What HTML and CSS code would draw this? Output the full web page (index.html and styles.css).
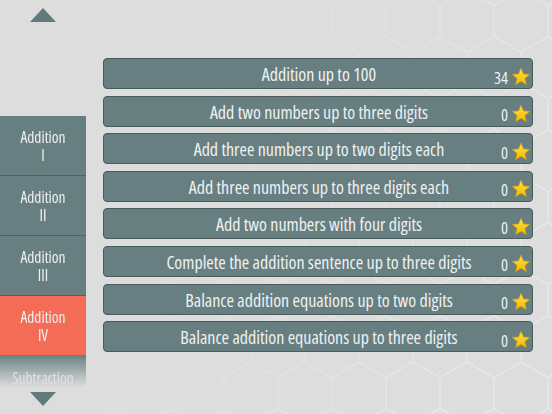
FILE: index.html
```html
<!DOCTYPE html>
<html>
<head>
<meta charset="utf-8">
<link rel="stylesheet" href="styles.css">
</head>
<body>
<div class="page">
  <svg class="hexbg" width="552" height="414" viewBox="0 0 552 414">
    <defs>
      <pattern id="hex" width="54" height="93" patternUnits="userSpaceOnUse" x="8" y="-10">
        <path d="M27 0 L54 15.5 L54 46.5 L27 62 L0 46.5 L0 15.5 Z M27 62 L27 93" fill="none" stroke="#ffffff" stroke-width="1.2"/>
      </pattern>
      <linearGradient id="fade" x1="0" y1="0" x2="1" y2="0.3">
        <stop offset="0.35" stop-color="#fff" stop-opacity="0"/>
        <stop offset="1" stop-color="#fff" stop-opacity="1"/>
      </linearGradient>
      <mask id="m"><rect width="552" height="414" fill="url(#fade)"/></mask>
    </defs>
    <rect width="552" height="414" fill="url(#hex)" mask="url(#m)" opacity="0.35"/>
  </svg>
  <div class="left">
    <div class="arrow up"></div>
    <div class="side">
      <div class="cat"><span class="l1">Addition</span><span class="l2">I</span></div>
      <div class="cat"><span class="l1">Addition</span><span class="l2">II</span></div>
      <div class="cat"><span class="l1">Addition</span><span class="l2">III</span></div>
      <div class="cat active"><span class="l1">Addition</span><span class="l2">IV</span></div>
      <div class="cat cut"><span class="l1">Subtraction</span></div>
    </div>
    <div class="arrow down"></div>
  </div>
  <div class="list">
    <div class="row"><span class="title">Addition up to 100</span><span class="meta"><span class="score">34</span><span class="star"><svg viewBox="0 0 24 24" width="20" height="20"><defs><linearGradient id="g" x1="0" y1="0" x2="0" y2="1"><stop offset="0" stop-color="#ffe14a"/><stop offset="1" stop-color="#f5b800"/></linearGradient></defs><path d="M12 1.5 L14.9 8.4 L22.3 8.9 L16.6 13.7 L18.4 21 L12 17.1 L5.6 21 L7.4 13.7 L1.7 8.9 L9.1 8.4 Z" fill="url(#g)" stroke="#e3a400" stroke-width="0.8" stroke-linejoin="round"/></svg></span></span></div>
    <div class="row"><span class="title">Add two numbers up to three digits</span><span class="meta"><span class="score">0</span><span class="star"><svg viewBox="0 0 24 24" width="20" height="20"><path d="M12 1.5 L14.9 8.4 L22.3 8.9 L16.6 13.7 L18.4 21 L12 17.1 L5.6 21 L7.4 13.7 L1.7 8.9 L9.1 8.4 Z" fill="url(#g)" stroke="#e3a400" stroke-width="0.8" stroke-linejoin="round"/></svg></span></span></div>
    <div class="row"><span class="title">Add three numbers up to two digits each</span><span class="meta"><span class="score">0</span><span class="star"><svg viewBox="0 0 24 24" width="20" height="20"><path d="M12 1.5 L14.9 8.4 L22.3 8.9 L16.6 13.7 L18.4 21 L12 17.1 L5.6 21 L7.4 13.7 L1.7 8.9 L9.1 8.4 Z" fill="url(#g)" stroke="#e3a400" stroke-width="0.8" stroke-linejoin="round"/></svg></span></span></div>
    <div class="row"><span class="title">Add three numbers up to three digits each</span><span class="meta"><span class="score">0</span><span class="star"><svg viewBox="0 0 24 24" width="20" height="20"><path d="M12 1.5 L14.9 8.4 L22.3 8.9 L16.6 13.7 L18.4 21 L12 17.1 L5.6 21 L7.4 13.7 L1.7 8.9 L9.1 8.4 Z" fill="url(#g)" stroke="#e3a400" stroke-width="0.8" stroke-linejoin="round"/></svg></span></span></div>
    <div class="row"><span class="title">Add two numbers with four digits</span><span class="meta"><span class="score">0</span><span class="star"><svg viewBox="0 0 24 24" width="20" height="20"><path d="M12 1.5 L14.9 8.4 L22.3 8.9 L16.6 13.7 L18.4 21 L12 17.1 L5.6 21 L7.4 13.7 L1.7 8.9 L9.1 8.4 Z" fill="url(#g)" stroke="#e3a400" stroke-width="0.8" stroke-linejoin="round"/></svg></span></span></div>
    <div class="row"><span class="title">Complete the addition sentence up to three digits</span><span class="meta"><span class="score">0</span><span class="star"><svg viewBox="0 0 24 24" width="20" height="20"><path d="M12 1.5 L14.9 8.4 L22.3 8.9 L16.6 13.7 L18.4 21 L12 17.1 L5.6 21 L7.4 13.7 L1.7 8.9 L9.1 8.4 Z" fill="url(#g)" stroke="#e3a400" stroke-width="0.8" stroke-linejoin="round"/></svg></span></span></div>
    <div class="row"><span class="title">Balance addition equations up to two digits</span><span class="meta"><span class="score">0</span><span class="star"><svg viewBox="0 0 24 24" width="20" height="20"><path d="M12 1.5 L14.9 8.4 L22.3 8.9 L16.6 13.7 L18.4 21 L12 17.1 L5.6 21 L7.4 13.7 L1.7 8.9 L9.1 8.4 Z" fill="url(#g)" stroke="#e3a400" stroke-width="0.8" stroke-linejoin="round"/></svg></span></span></div>
    <div class="row"><span class="title">Balance addition equations up to three digits</span><span class="meta"><span class="score">0</span><span class="star"><svg viewBox="0 0 24 24" width="20" height="20"><path d="M12 1.5 L14.9 8.4 L22.3 8.9 L16.6 13.7 L18.4 21 L12 17.1 L5.6 21 L7.4 13.7 L1.7 8.9 L9.1 8.4 Z" fill="url(#g)" stroke="#e3a400" stroke-width="0.8" stroke-linejoin="round"/></svg></span></span></div>
  </div>
</div>
</body>
</html>
```
FILE: styles.css
```css
html, body { margin: 0; padding: 0; }
body {
  width: 552px; height: 414px; overflow: hidden;
  background: #dcdddc;
  font-family: "Open Sans", "DejaVu Sans Condensed", sans-serif;
  font-stretch: 75%;
  font-weight: 375;
  color: #eef1f0;
}
.page { position: relative; width: 552px; height: 414px; display: flex; }
.hexbg { position: absolute; left: 0; top: 0; }
.left { position: relative; width: 86px; display: flex; flex-direction: column; align-items: center; }
.arrow { width: 0; height: 0; border-left: 13px solid transparent; border-right: 13px solid transparent; }
.arrow.up { border-bottom: 14px solid #5f7b7c; margin-top: 8px; margin-bottom: 94px; }
.arrow.down { border-top: 14px solid #5f7b7c; margin-top: 5px; }
.side { width: 86px; height: 271px; overflow: hidden; display: flex; flex-direction: column;
  -webkit-mask-image: linear-gradient(to bottom, #000 88%, transparent 100%);
  mask-image: linear-gradient(to bottom, #000 88%, transparent 100%); }
.cat { flex: none; height: 59px; border-bottom: 1px solid #4f6263; background: #677f80;
  display: flex; flex-direction: column; align-items: center; justify-content: center; text-align: center;
  font-size: 15.5px; }
.l1, .l2 { display: block; height: 18px; line-height: 18px; }
.cat.cut { justify-content: flex-start; padding-top: 13px; height: 46px; }
.cat.active { background: #f46b56; border-bottom-color: #c85545; }
.list { position: relative; margin-left: 17px; margin-top: 58px; display: flex; flex-direction: column; gap: 6.6px; }
.row { width: 428px; height: 29px; border: 1.5px solid #4a5b5c; border-radius: 4px; background: #677f80;
  display: flex; align-items: center; box-sizing: content-box; }
.title { flex: 1; text-align: center; font-size: 18px; padding-left: 50px; padding-top: 1px; white-space: nowrap; }
.meta { width: 48px; display: flex; justify-content: flex-end; align-items: center; margin-top: 6px; }
.score { font-size: 16.5px; margin-right: 2px; margin-top: 1px; }
.star { width: 22px; height: 22px; display: flex; align-items: center; justify-content: center; }
```
